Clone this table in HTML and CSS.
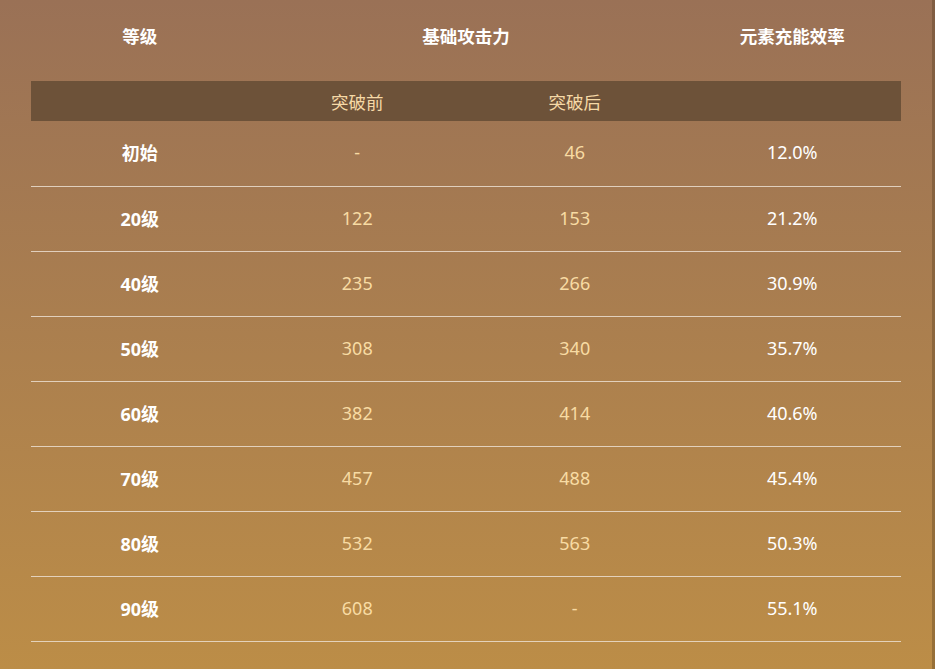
FILE: index.html
```html
<!DOCTYPE html>
<html lang="zh-CN">
<head>
  <meta charset="UTF-8">
  <meta name="viewport" content="width=device-width, initial-scale=1.0">
  <title>角色属性</title>
  <link rel="stylesheet" href="styles.css">
</head>
<body>

  <div class="page">
    <table class="stats">
      <thead>
        <tr class="head">
          <th>等级</th>
          <th colspan="2">基础攻击力</th>
          <th>元素充能效率</th>
        </tr>
        <tr class="sub">
          <th></th>
          <th>突破前</th>
          <th>突破后</th>
          <th></th>
        </tr>
      </thead>
      <tbody>
        <tr><td class="lv">初始</td><td class="atk">-</td><td class="atk">46</td><td class="er">12.0%</td></tr>
        <tr><td class="lv">20级</td><td class="atk">122</td><td class="atk">153</td><td class="er">21.2%</td></tr>
        <tr><td class="lv">40级</td><td class="atk">235</td><td class="atk">266</td><td class="er">30.9%</td></tr>
        <tr><td class="lv">50级</td><td class="atk">308</td><td class="atk">340</td><td class="er">35.7%</td></tr>
        <tr><td class="lv">60级</td><td class="atk">382</td><td class="atk">414</td><td class="er">40.6%</td></tr>
        <tr><td class="lv">70级</td><td class="atk">457</td><td class="atk">488</td><td class="er">45.4%</td></tr>
        <tr><td class="lv">80级</td><td class="atk">532</td><td class="atk">563</td><td class="er">50.3%</td></tr>
        <tr><td class="lv">90级</td><td class="atk">608</td><td class="atk">-</td><td class="er">55.1%</td></tr>
      </tbody>
    </table>
  </div>

</body>
</html>
```

FILE: styles.css
```css
html, body {
  margin: 0;
  height: 100%;
}

body {
  font-family: "Noto Sans", "Noto Sans CJK SC", sans-serif;
  background: linear-gradient(to bottom, #9a7156 0%, #bc8d47 100%);
  border-right: 3px solid rgba(70, 45, 20, 0.3);
  box-sizing: border-box;
}

.page {
  padding: 0 31px;
}

.stats {
  width: 870px;
  border-collapse: collapse;
  table-layout: fixed;
  text-align: center;
}

.head th {
  height: 81px;
  padding: 0 0 10px;
  font-size: 17.5px;
  font-weight: bold;
  color: #fff;
  box-sizing: border-box;
}

.sub th {
  height: 40px;
  padding: 0;
  background-color: #6d5239;
  font-size: 17.5px;
  font-weight: normal;
  color: #f6d9a6;
}

tbody td {
  height: 62px;
  padding: 0 0 2px;
  border-bottom: 1px solid rgba(235, 222, 208, 0.85);
  font-size: 18px;
}

tbody tr:first-child td {
  height: 61px;
  padding-bottom: 4px;
}

.lv {
  font-weight: bold;
  color: #fff;
}

.atk {
  color: #f8dba3;
}

.er {
  color: #fff;
}
```
